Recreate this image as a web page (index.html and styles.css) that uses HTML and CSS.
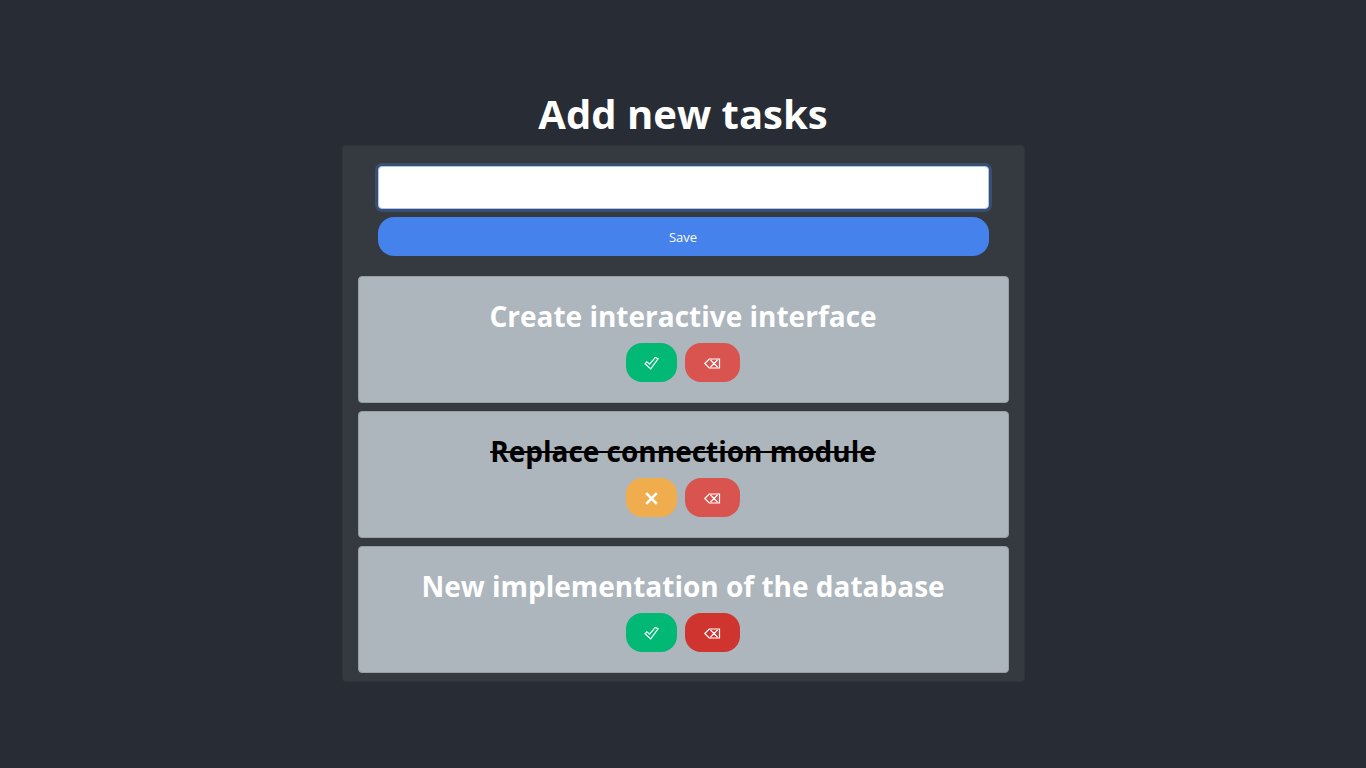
FILE: index.html
```html
<!DOCTYPE html>
<html lang="en">
<head>
<meta charset="utf-8">
<meta name="viewport" content="width=device-width, initial-scale=1">
<title>Add new tasks</title>
<link rel="stylesheet" href="styles.css">
</head>
<body>
<svg class="sprite" aria-hidden="true">
  <symbol id="check" viewBox="0 0 15 16"><path d="M1 8.8 2.9 6.9 5.6 9.2 11.3 2.4 14.1 3.8 6.7 13.9Z"/></symbol>
  <symbol id="erase" viewBox="0 0 19 16"><path d="M1.8 8.5 6.2 4H16.5V13H6.2ZM7.5 5 14.5 12M14.5 5 7.5 12"/></symbol>
  <symbol id="cross" viewBox="0 0 15 16"><path d="M2.2 3.2 12.8 13.8M12.8 3.2 2.2 13.8"/></symbol>
</svg>
<main class="app">
  <h1 class="app-title">Add new tasks</h1>
  <section class="panel">
    <form class="task-form">
      <input class="task-input" type="text" aria-label="New task">
      <button class="btn btn-save" type="button">Save</button>
    </form>
    <article class="task">
      <h2 class="task-title">Create interactive interface</h2>
      <div class="actions">
        <button class="btn btn-done" type="button" aria-label="Complete"><svg class="icon"><use href="#check"/></svg></button>
        <button class="btn btn-delete" type="button" aria-label="Delete"><svg class="icon icon-wide"><use href="#erase"/></svg></button>
      </div>
    </article>
    <article class="task">
      <h2 class="task-title completed">Replace connection module</h2>
      <div class="actions">
        <button class="btn btn-undo" type="button" aria-label="Undo"><svg class="icon icon-bold"><use href="#cross"/></svg></button>
        <button class="btn btn-delete" type="button" aria-label="Delete"><svg class="icon icon-wide"><use href="#erase"/></svg></button>
      </div>
    </article>
    <article class="task">
      <h2 class="task-title">New implementation of the database</h2>
      <div class="actions">
        <button class="btn btn-done" type="button" aria-label="Complete"><svg class="icon"><use href="#check"/></svg></button>
        <button class="btn btn-delete active" type="button" aria-label="Delete"><svg class="icon icon-wide"><use href="#erase"/></svg></button>
      </div>
    </article>
  </section>
</main>
</body>
</html>
```
FILE: styles.css
```css
* { box-sizing: border-box; }
body {
  margin: 0;
  background: #282c34;
  color: #fff;
  font-family: "Segoe UI", "Open Sans", "Noto Sans", sans-serif;
}
.sprite { display: none; }
.app {
  min-height: 100vh;
  display: flex;
  flex-direction: column;
  align-items: center;
  justify-content: center;
  text-align: center;
}
.app-title {
  margin: 0 0 3px;
  font-size: 40px;
  line-height: 56px;
  font-weight: 700;
}
.panel {
  width: 50%;
  display: flex;
  flex-direction: column;
  gap: 8px;
  padding: 0 15px 8px;
  background: #353a40;
  border: 1px solid #31353b;
  border-radius: 4px;
}
.task-form {
  display: flex;
  flex-direction: column;
  gap: 8px;
  padding: 20px 20px 12px;
}
.task-input {
  width: 100%;
  height: 43px;
  padding: 8px 12px;
  background: #fff;
  border: 1px solid #a9c6f7;
  border-radius: 4px;
  outline: none;
  box-shadow: 0 0 0 3px #3a4f70;
  font: inherit;
}
.btn {
  display: flex;
  align-items: center;
  justify-content: center;
  height: 39px;
  padding: 0 18px;
  border: 0;
  border-radius: 16px;
  color: #fff;
  font: inherit;
  font-size: 13px;
}
.btn-save { background: #4582ec; }
.btn-done { background: #02b875; }
.btn-undo { background: #f0ad4e; }
.btn-delete { background: #d9534f; }
.btn-delete.active { background: #d0342f; }
.task {
  padding: 20px;
  background: #adb5bd;
  border: 1px solid #979ea5;
  border-radius: 4px;
}
.task-title {
  margin: 0 0 8px;
  font-size: 28px;
  line-height: 38px;
  font-weight: 700;
}
.completed {
  color: #000;
  text-decoration: line-through;
  text-decoration-thickness: 2px;
}
.actions {
  display: flex;
  justify-content: center;
  gap: 8px;
}
.icon {
  width: 15px;
  height: 16px;
  fill: none;
  stroke: #fff;
  stroke-width: 1.2;
}
.icon-wide { width: 19px; }
.icon-bold { stroke-width: 2.6; }
```
